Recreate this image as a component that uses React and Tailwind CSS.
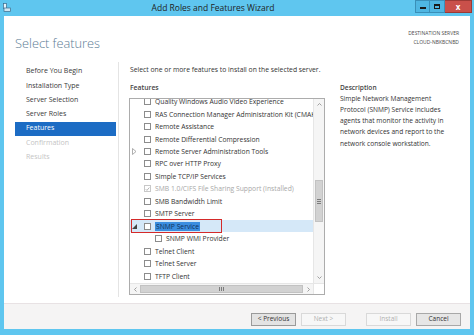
import React from 'react';

const font = "font-['Open_Sans','Noto_Sans',sans-serif]";

const features = [
  { label: 'Quality Windows Audio Video Experience' },
  { label: 'RAS Connection Manager Administration Kit (CMAK)' },
  { label: 'Remote Assistance' },
  { label: 'Remote Differential Compression' },
  { label: 'Remote Server Administration Tools', collapsed: true },
  { label: 'RPC over HTTP Proxy' },
  { label: 'Simple TCP/IP Services' },
  { label: 'SMB 1.0/CIFS File Sharing Support (Installed)', installed: true },
  { label: 'SMB Bandwidth Limit' },
  { label: 'SMTP Server' },
  { label: 'SNMP Service', selected: true, expanded: true },
  { label: 'SNMP WMI Provider', child: true },
  { label: 'Telnet Client' },
  { label: 'Telnet Server' },
  { label: 'TFTP Client' },
];

const steps = [
  { label: 'Before You Begin' },
  { label: 'Installation Type' },
  { label: 'Server Selection' },
  { label: 'Server Roles' },
  { label: 'Features', active: true },
  { label: 'Confirmation', disabled: true },
  { label: 'Results', disabled: true },
];

const descLines = [
  'Simple Network Management',
  'Protocol (SNMP) Service includes',
  'agents that monitor the activity in',
  'network devices and report to the',
  'network console workstation.',
];

function Checkbox({ checked, disabled }) {
  return (
    <span
      className={`w-[7px] h-[7px] flex-shrink-0 flex items-center justify-center border bg-white ${
        disabled ? 'border-[#c8c8c8]' : 'border-[#8c8c8c]'
      }`}
    >
      {checked && (
        <svg width="6" height="6" viewBox="0 0 6 6">
          <path d="M0.8 3.2 L2.3 4.7 L5.2 1.2" stroke="#a8a8a8" strokeWidth="1" fill="none" />
        </svg>
      )}
    </span>
  );
}

function FeatureRow({ item }) {
  return (
    <div
      className={`relative h-[12.46px] flex items-center pl-[2px] whitespace-nowrap ${
        item.selected ? 'bg-[#d5e8f8]' : ''
      }`}
    >
      <span className="w-[12px] flex-shrink-0 flex items-center">
        {item.collapsed && (
          <svg width="5" height="7" viewBox="0 0 5 7">
            <path d="M0.5 0.5 L4 3.5 L0.5 6.5 Z" fill="none" stroke="#9a9a9a" strokeWidth="0.8" />
          </svg>
        )}
        {item.expanded && (
          <svg width="5" height="5" viewBox="0 0 5 5">
            <path d="M5 0 L5 5 L0 5 Z" fill="#444" />
          </svg>
        )}
      </span>
      {item.child && <span className="w-[11px] flex-shrink-0" />}
      <Checkbox checked={item.installed} disabled={item.installed} />
      <span
        className={`ml-[4px] leading-[9px] ${
          item.installed ? 'text-[#a8a8a8]' : 'text-[#333]'
        } ${item.selected ? 'bg-[#3b8ee0] text-[#10305a] px-[1px]' : ''}`}
      >
        {item.label}
      </span>
      {item.selected && (
        <span className="absolute left-[1px] top-[-1px] w-[91px] h-[14px] border-[1.5px] border-[#d42a2a]" />
      )}
    </div>
  );
}

function WinButton({ children, disabled, primary }) {
  return (
    <button
      className={`h-[13px] w-[45px] text-[6.5px] leading-none border ${
        disabled
          ? 'border-[#d9d9d9] bg-[#f7f7f7] text-[#b0b0b0]'
          : primary
          ? 'border-[#9a9a9a] bg-[#e3e3e3] text-[#333]'
          : 'border-[#a8a8a8] bg-[#e6e6e6] text-[#333]'
      }`}
    >
      {children}
    </button>
  );
}

export default function App() {
  return (
    <div className={`w-[474px] h-[335px] bg-[#5fc6ef] flex flex-col overflow-hidden ${font}`}>
      {/* Title bar */}
      <div className="h-[16px] flex items-start relative flex-shrink-0">
        <div className="pl-[3px] pt-[3px]">
          <svg width="8" height="9" viewBox="0 0 8 9">
            <rect x="0.5" y="0.5" width="3" height="5" fill="#e8f4fb" stroke="#3a6a8a" strokeWidth="0.7" />
            <rect x="1" y="5" width="6.5" height="3.5" fill="#d0e6f3" stroke="#3a6a8a" strokeWidth="0.7" />
          </svg>
        </div>
        <div className="flex-1 text-center text-[8.5px] leading-[15px] text-[#1e1e1e]">Add Roles and Features Wizard</div>
        <div className="flex h-[13px] mr-[2px]">
          <div className="w-[15px] bg-[#4fb6e2] border border-[#3a8fb8] flex items-end justify-center pb-[3px]">
            <span className="w-[6px] h-[2px] bg-[#1a1a1a]" />
          </div>
          <div className="w-[15px] bg-[#4fb6e2] border border-l-0 border-[#3a8fb8] flex items-center justify-center">
            <span className="w-[6px] h-[5px] border border-t-2 border-[#1a1a1a]" />
          </div>
          <div className="w-[27px] bg-[#c9504a] border border-l-0 border-[#9c3a35] flex items-center justify-center text-white text-[8px] font-bold leading-none">
            x
          </div>
        </div>
      </div>

      {/* Window body */}
      <div className="flex-1 mx-[4px] mb-[6px] bg-white flex flex-col">
        {/* Header */}
        <div className="h-[46px] flex justify-between flex-shrink-0">
          <h1 className="pl-[11px] pt-[17px] text-[12.8px] leading-[20px] font-light text-[#5d7d96]">Select features</h1>
          <div className="pr-[11px] pt-[13px] text-right text-[5px] leading-[9px] text-[#4a4a4a]">
            <div>DESTINATION SERVER</div>
            <div>CLOUD-NBKBCNBD</div>
          </div>
        </div>

        {/* Main */}
        <div className="flex flex-1 min-h-0">
          {/* Nav */}
          <div className="w-[115px] flex-shrink-0 pt-[2.5px] mb-[6px] border-r border-[#e4e4e4]">
            {steps.map((s) => (
              <div
                key={s.label}
                className={`ml-[11px] mr-[2px] h-[14.25px] pl-[11px] flex items-center text-[7px] ${
                  s.active ? 'bg-[#1c6cc4] text-white' : s.disabled ? 'text-[#c4c4c4]' : 'text-[#3a3a3a]'
                }`}
              >
                {s.label}
              </div>
            ))}
          </div>

          {/* Content */}
          <div className="ml-[10px] w-[196px] flex-shrink-0 flex flex-col pt-[3px] text-[6.8px] text-[#333]">
            <p className="h-[9px] leading-[9px] pl-[1px] whitespace-nowrap">Select one or more features to install on the selected server.</p>
            <p className="mt-[8.5px] h-[9px] leading-[9px] pl-[1px] font-semibold text-[#444]">Features</p>
            <div className="mt-[6.5px] h-[197px] border border-[#acacac] flex flex-col text-[6.75px]">
              <div className="flex h-[184px]">
                <div className="flex-1 overflow-hidden">
                  <div className="mt-[-3.5px]">
                    {features.map((f) => (
                      <FeatureRow key={f.label} item={f} />
                    ))}
                  </div>
                </div>
                {/* vertical scrollbar */}
                <div className="w-[11px] bg-[#f5f5f5] border-l border-[#e6e6e6] flex flex-col">
                  <div className="h-[11px] flex items-center justify-center">
                    <svg width="5" height="3" viewBox="0 0 5 3"><path d="M0.5 2.5 L2.5 0.5 L4.5 2.5" stroke="#8a8a8a" strokeWidth="0.8" fill="none" /></svg>
                  </div>
                  <div className="h-[70px]" />
                  <div className="h-[42px] mx-[1px] bg-[#d2d2d2] border border-[#c2c2c2] flex items-center justify-center">
                    <div className="flex flex-col gap-[1px]">
                      <span className="w-[4px] h-px bg-[#7c7c7c]" />
                      <span className="w-[4px] h-px bg-[#7c7c7c]" />
                      <span className="w-[4px] h-px bg-[#7c7c7c]" />
                    </div>
                  </div>
                  <div className="flex-1" />
                  <div className="h-[11px] flex items-center justify-center">
                    <svg width="5" height="3" viewBox="0 0 5 3"><path d="M0.5 0.5 L2.5 2.5 L4.5 0.5" stroke="#8a8a8a" strokeWidth="0.8" fill="none" /></svg>
                  </div>
                </div>
              </div>
              {/* horizontal scrollbar */}
              <div className="h-[11px] flex bg-[#f5f5f5] border-t border-[#e6e6e6]">
                <div className="w-[10px] flex items-center justify-center">
                  <svg width="3" height="5" viewBox="0 0 3 5"><path d="M2.5 0.5 L0.5 2.5 L2.5 4.5" stroke="#8a8a8a" strokeWidth="0.8" fill="none" /></svg>
                </div>
                <div className="w-[163px] my-[1px] bg-[#d2d2d2] border border-[#c2c2c2] flex items-center justify-center">
                  <div className="flex gap-[1px]">
                    <span className="w-px h-[4px] bg-[#7c7c7c]" />
                    <span className="w-px h-[4px] bg-[#7c7c7c]" />
                    <span className="w-px h-[4px] bg-[#7c7c7c]" />
                  </div>
                </div>
                <div className="w-[10px] flex items-center justify-center">
                  <svg width="3" height="5" viewBox="0 0 3 5"><path d="M0.5 0.5 L2.5 2.5 L0.5 4.5" stroke="#8a8a8a" strokeWidth="0.8" fill="none" /></svg>
                </div>
                <div className="flex-1 bg-white border-l border-[#e6e6e6]" />
              </div>
            </div>
          </div>

          {/* Description */}
          <div className="ml-[15px] flex-1 pt-[20.5px] pr-[4px] text-[6.6px] text-[#333]">
            <p className="h-[9px] leading-[9px] font-semibold text-[#444]">Description</p>
            <div className="mt-[1px] leading-[11.25px] whitespace-nowrap">
              {descLines.map((line) => (
                <div key={line}>{line}</div>
              ))}
            </div>
          </div>
        </div>

        {/* Footer */}
        <div className="h-[26px] flex-shrink-0 border-t border-[#e8e2e4] bg-[#f5f4f4] flex items-start justify-end pt-[9px] pr-[9px]">
          <WinButton primary>&lt; Previous</WinButton>
          <div className="w-[5px]" />
          <WinButton disabled>Next &gt;</WinButton>
          <div className="w-[20px]" />
          <WinButton disabled>Install</WinButton>
          <div className="w-[5px]" />
          <WinButton>Cancel</WinButton>
        </div>
      </div>
    </div>
  );
}
